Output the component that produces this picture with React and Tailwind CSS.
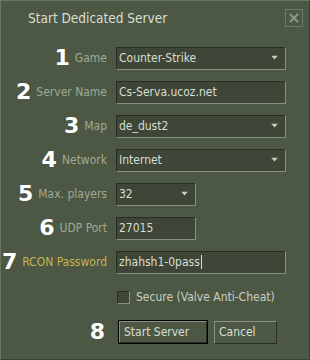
import React from 'react';

const font = { fontFamily: '"DejaVu Sans Condensed", "DejaVu Sans", sans-serif' };

const Num = ({ n }) => (
  <span className="text-[22px] font-bold leading-none text-white font-['DejaVu_Sans',sans-serif]">{n}</span>
);

const Arrow = () => (
  <svg width="8" height="5" viewBox="0 0 8 5" className="absolute right-[6px] top-1/2 -translate-y-1/2">
    <path d="M0 0H7L3.5 4Z" fill="#c8ceC0" />
  </svg>
);

const Field = ({ value, width, combo, caret }) => (
  <div
    className={`${width} relative h-[23px] bg-[#3e4637] border border-t-[#292e24] border-l-[#292e24] border-r-[#889180] border-b-[#889180] flex items-center pl-[2px] text-[12px] text-[#d8ded3]`}
  >
    <span>{value}</span>
    {caret && <span className="w-px h-[14px] bg-[#d8ded3] ml-px" />}
    {combo && <Arrow />}
  </div>
);

const Row = ({ n, label, yellow, children }) => (
  <div className="h-[34px] flex items-center">
    <div className="w-[106px] flex items-center justify-end gap-[5px] whitespace-nowrap">
      <Num n={n} />
      <span className={`text-[12px] ${yellow ? 'text-[#c4b550]' : 'text-[#a0aa95]'}`}>{label}</span>
    </div>
    <div className="ml-[9px]">{children}</div>
  </div>
);

export default function App() {
  return (
    <div
      className="w-[310px] h-[360px] bg-[#4c5844] border-t border-l border-[#6b765f] border-r-[#3a4233] border-b-[#3a4233] border-r border-b"
      style={font}
    >
      <div className="flex items-center justify-between pl-[27px] pr-[6px] pt-[7px]">
        <span className="text-[13.5px] text-[#d8ded3]">Start Dedicated Server</span>
        <div className="w-[18px] h-[18px] border border-[#6f7a64] flex items-center justify-center">
          <svg width="10" height="10" viewBox="0 0 10 10">
            <path d="M1 1L9 9M9 1L1 9" stroke="#8f9884" strokeWidth="2" />
          </svg>
        </div>
      </div>

      <div className="mt-[13px] flex flex-col">
        <Row n="1" label="Game">
          <Field width="w-[170px]" value="Counter-Strike" combo />
        </Row>
        <Row n="2" label="Server Name">
          <Field width="w-[170px]" value="Cs-Serva.ucoz.net" />
        </Row>
        <Row n="3" label="Map">
          <Field width="w-[170px]" value="de_dust2" combo />
        </Row>
        <Row n="4" label="Network">
          <Field width="w-[170px]" value="Internet" combo />
        </Row>
        <Row n="5" label="Max. players">
          <Field width="w-[80px]" value="32" combo />
        </Row>
        <Row n="6" label="UDP Port">
          <Field width="w-[80px]" value="27015" />
        </Row>
        <Row n="7" label="RCON Password" yellow>
          <Field width="w-[170px]" value="zhahsh1-0pass" caret />
        </Row>

        <div className="h-[36px] flex items-center pl-[116px] gap-[6px]">
          <div className="w-[13px] h-[13px] bg-[#3e4637] border border-t-[#292e24] border-l-[#292e24] border-r-[#889180] border-b-[#889180]" />
          <span className="text-[12px] text-[#c8cec0]">Secure (Valve Anti-Cheat)</span>
        </div>

        <div className="h-[34px] flex items-center">
          <div className="w-[104px] flex justify-end">
            <Num n="8" />
          </div>
          <div className="ml-[13px] flex items-center gap-[6px]">
            <div className="border border-black">
              <div className="w-[88px] h-[22px] border border-t-[#889180] border-l-[#889180] border-r-[#292e24] border-b-[#292e24] flex items-center pl-[4px] text-[12px] text-[#d8ded3]">
                Start Server
              </div>
            </div>
            <div className="w-[63px] h-[23px] border border-t-[#889180] border-l-[#889180] border-r-[#292e24] border-b-[#292e24] flex items-center pl-[4px] text-[12px] text-[#d8ded3]">
              Cancel
            </div>
          </div>
        </div>
      </div>
    </div>
  );
}
